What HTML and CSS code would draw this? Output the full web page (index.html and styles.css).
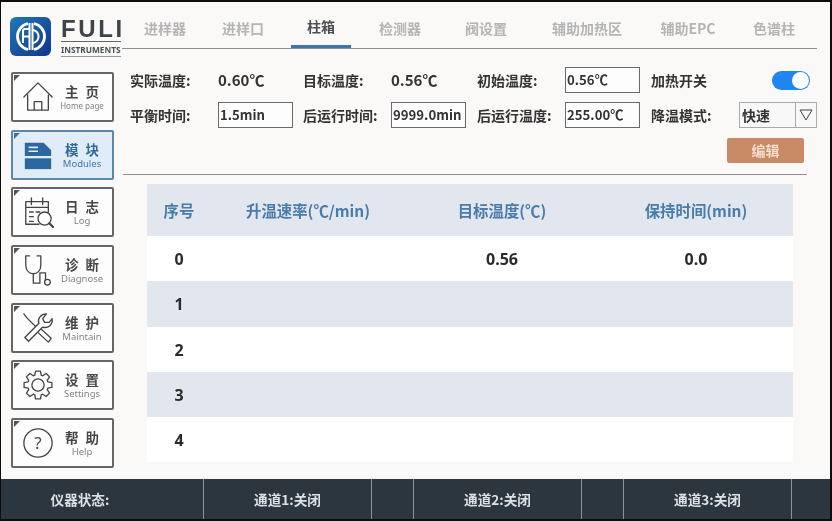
FILE: index.html
```html
<!DOCTYPE html>
<html lang="zh">
<head>
<meta charset="utf-8">
<title>FULI Instruments</title>
<link rel="stylesheet" href="styles.css">
</head>
<body>
<div class="frame">
  <header class="header">
    <div class="brand">
      <svg class="logo" viewBox="0 0 41 39">
        <defs><linearGradient id="lg" x1="0" y1="0" x2="1" y2="1"><stop offset="0" stop-color="#1f78b8"/><stop offset="1" stop-color="#12348a"/></linearGradient></defs>
        <rect width="41" height="39" rx="6" fill="url(#lg)"/>
        <path d="M18 6.500A13.300 13.300 0 0 0 18 32.500M24 6.500A13.300 13.300 0 0 1 24 32.500" fill="none" stroke="#fff" stroke-width="2.800"/>
        <path d="M19.500 12h-4.500a2 2 0 0 0-2 2v12M13 19.500h6M19.500 6v27M22.500 6v27" fill="none" stroke="#fff" stroke-width="2"/>
        <path d="M23 13c4 1 5.500 3.500 5.500 6.500S27 25 23 26" fill="none" stroke="#fff" stroke-width="2"/>
      </svg>
      <div class="wordmark">
        <span class="fuli">FULI</span>
        <span class="instruments">INSTRUMENTS</span>
      </div>
    </div>
    <nav class="tabs">
      <a class="tab">进样器</a>
      <a class="tab">进样口</a>
      <a class="tab active">柱箱</a>
      <a class="tab">检测器</a>
      <a class="tab">阀设置</a>
      <a class="tab">辅助加热区</a>
      <a class="tab">辅助EPC</a>
      <a class="tab">色谱柱</a>
    </nav>
  </header>

  <div class="main">
    <aside class="sidebar">
      <button class="nav-btn">
        <span class="nav-icon"><svg viewBox="0 0 34 34"><path d="M2 17 17 2l15 15M6 15v16h22V15M13 31v-9h8v9" class="ln"/></svg></span>
        <span class="nav-text"><b>主页</b><small class="tight">Home page</small></span>
      </button>
      <button class="nav-btn current">
        <span class="nav-icon"><svg viewBox="0 0 34 34"><path d="M3 4h20l8 8v6H3z" fill="#2e66a0"/><path d="M3 20.500h28V32H3z" fill="#2e66a0"/><path d="M7 9h10M7 13h10" stroke="#e0edf8" stroke-width="1.800"/></svg></span>
        <span class="nav-text"><b>模块</b><small>Modules</small></span>
      </button>
      <button class="nav-btn">
        <span class="nav-icon"><svg viewBox="0 0 34 34"><path d="M18 30H4V6h24v11M4 12h24M10 2v7M22 2v7M8 17h4M15 17h4M8 22h4M8 27h4" class="ln"/><circle cx="24" cy="24" r="7" class="ln"/><path d="m29 29 4 4" class="ln thick"/></svg></span>
        <span class="nav-text"><b>日志</b><small>Log</small></span>
      </button>
      <button class="nav-btn">
        <span class="nav-icon"><svg viewBox="0 0 34 34"><path d="M8 2H4v10c0 6 4 9 8 9s8-3 8-9V2h-4M12 21v10h7V20h6v8" class="ln"/><circle cx="27" cy="30" r="3" class="ln"/></svg></span>
        <span class="nav-text"><b>诊断</b><small>Diagnose</small></span>
      </button>
      <button class="nav-btn">
        <span class="nav-icon"><svg viewBox="0 0 34 34"><path d="M2 2l3 4 11 11" class="ln"/><path d="M17 15 31 28l-3 4-14-13z" class="ln white"/><path d="M3 27 18 12C16 7 20 2 26 2l-4 5 2 4h5l3-4c1 6-4 11-10 9L7 31z" class="ln white"/></svg></span>
        <span class="nav-text"><b>维护</b><small>Maintain</small></span>
      </button>
      <button class="nav-btn">
        <span class="nav-icon"><svg viewBox="0 0 34 34"><path d="M27.460 13.600 31.770 14.400V19.600L27.460 20.400 26.800 22 29.290 25.600 25.600 29.290 22 26.800 20.400 27.460 19.600 31.770H14.400L13.600 27.460 12 26.800 8.400 29.290 4.710 25.600 7.200 22 6.540 20.400 2.230 19.600V14.400L6.540 13.600 7.200 12 4.710 8.400 8.400 4.710 12 7.200 13.600 6.540 14.400 2.230H19.600L20.400 6.540 22 7.200 25.600 4.710 29.290 8.400 26.800 12z" class="ln"/><circle cx="17" cy="17" r="6.500" class="ln"/></svg></span>
        <span class="nav-text"><b>设置</b><small>Settings</small></span>
      </button>
      <button class="nav-btn">
        <span class="nav-icon"><svg viewBox="0 0 34 34"><circle cx="17" cy="17" r="15" class="ln"/><text x="17" y="23" class="help-mark">?</text></svg></span>
        <span class="nav-text"><b>帮助</b><small>Help</small></span>
      </button>
    </aside>

    <section class="content">
      <div class="params">
        <span class="lbl">实际温度:</span><span class="val">0.60℃</span>
        <span class="lbl">目标温度:</span><span class="val">0.56℃</span>
        <span class="lbl">初始温度:</span><span class="input">0.56℃</span>
        <span class="lbl">加热开关</span><span class="switch"><i></i></span>
        <span class="lbl">平衡时间:</span><span class="input">1.5min</span>
        <span class="lbl">后运行时间:</span><span class="input">9999.0min</span>
        <span class="lbl">后运行温度:</span><span class="input">255.00℃</span>
        <span class="lbl">降温模式:</span>
        <span class="select"><span>快速</span><span class="caret"><svg viewBox="0 0 14 12" width="14" height="12"><path d="M1 1h12L7 11z" fill="none" stroke="#444" stroke-width="1"/></svg></span></span>
      </div>
      <div class="actions"><button class="edit">编辑</button></div>
      <table class="grid">
        <thead><tr><th>序号</th><th>升温速率(℃/min)</th><th>目标温度(℃)</th><th>保持时间(min)</th></tr></thead>
        <tbody>
          <tr><td>0</td><td></td><td>0.56</td><td>0.0</td></tr>
          <tr><td>1</td><td></td><td></td><td></td></tr>
          <tr><td>2</td><td></td><td></td><td></td></tr>
          <tr><td>3</td><td></td><td></td><td></td></tr>
          <tr><td>4</td><td></td><td></td><td></td></tr>
        </tbody>
      </table>
    </section>
  </div>

  <footer class="status">
    <span class="cell first">仪器状态:</span>
    <span class="cell">通道1:关闭</span>
    <span class="cell"></span>
    <span class="cell">通道2:关闭</span>
    <span class="cell"></span>
    <span class="cell">通道3:关闭</span>
    <span class="cell"></span>
  </footer>
</div>
</body>
</html>
```
FILE: styles.css
```css
* { box-sizing: border-box; }
html, body { margin: 0; padding: 0; background: #fff; }
body { font-family: "Noto Sans CJK SC", "Noto Sans", sans-serif; }

.frame {
  width: 832px;
  height: 521px;
  border: solid #0d0d0d;
  border-width: 2px 2px 2px 1px;
  background: #fbf9f7;
  display: flex;
  flex-direction: column;
  overflow: hidden;
  filter: blur(0.4px);
}

/* header */
.header { display: flex; height: 47px; flex: none; overflow: visible; }
.brand { width: 121px; height: 54px; display: flex; padding: 15px 0 0 9px; flex: none; }
.logo { width: 41px; height: 39px; flex: none; }
.wordmark { margin-left: 10px; display: flex; flex-direction: column; width: 60px; flex: none; }
.fuli {
  font: 700 24px/24px "Liberation Sans", sans-serif;
  letter-spacing: 2.600px;
  color: #3f444a;
  height: 25px;
  border-bottom: 1px solid #666;
  white-space: nowrap;
}
.instruments {
  font: 700 8.300px/12px "Noto Sans", sans-serif;
  color: #4a4f55;
  white-space: nowrap;
  padding-top: 2px;
  height: 15px;
  border-bottom: 1px solid #999;
}
.tabs {
  width: 695px;
  height: 47px;
  padding-left: 4px;
  border-bottom: 1px solid #8f8f8f;
  display: grid;
  grid-template-columns: 78px 78px 78px 80px 92px 110px 92px 80px;
}
.tab {
  justify-self: center;
  height: 46px;
  padding: 16px 0 0;
  font-size: 14px;
  line-height: 20px;
  font-weight: 700;
  color: #b4b4b4;
  white-space: nowrap;
}
.tab.active {
  color: #4a4f55;
  padding: 14px 16px 0;
  border-bottom: 3px solid #3f74a8;
}

/* main */
.main { flex: 1; display: flex; min-height: 0; }
.sidebar {
  width: 122px;
  flex: none;
  padding: 23px 0 0 10px;
  display: flex;
  flex-direction: column;
  gap: 7.700px;
}
.nav-btn {
  position: relative;
  width: 103px;
  height: 50px;
  padding: 0;
  border: 2px solid #666;
  border-radius: 2px;
  background: #fdfdfd;
  display: flex;
  align-items: center;
  font-family: inherit;
}
.nav-btn::before {
  content: "";
  position: absolute;
  left: 1px;
  top: 1px;
  border-style: solid;
  border-width: 6px 6px 0 0;
  border-color: #555 transparent transparent transparent;
}
.nav-icon { width: 50px; display: flex; justify-content: center; flex: none; }
.nav-icon svg { width: 32px; height: 32px; display: block; }
.nav-text { width: 38px; display: flex; flex-direction: column; align-items: center; flex: none; }
.nav-text b {
  font-size: 13.500px;
  line-height: 18px;
  font-weight: 700;
  letter-spacing: 7px;
  margin-right: -7px;
  color: #474747;
  white-space: nowrap;
}
.nav-text small {
  font: 400 9.500px/12px "Noto Sans", sans-serif;
  color: #7f8488;
  white-space: nowrap;
}
.nav-text small.tight { font-size: 8px; }
.nav-btn.current { background: #e0edf8; border-color: #5f86a5; }
.nav-btn.current::before { border-top-color: #3f6f9e; }
.nav-btn.current b { color: #2f6a9c; }
.nav-btn.current small { color: #3f76a6; }

.ln { fill: none; stroke: #444; stroke-width: 1.400; stroke-linejoin: round; stroke-linecap: round; }
.ln.thick { stroke-width: 2.400; }
.ln.white { fill: #fdfdfd; }
.help-mark { font: 400 18px "Noto Sans", sans-serif; fill: #444; text-anchor: middle; }

/* content */
.content { flex: 1; min-width: 0; }
.params {
  margin-left: 7px;
  padding-top: 18px;
  display: grid;
  grid-template-columns: 88px 85px 88px 86px 88px 86px 88px 78px;
  grid-auto-rows: 26px;
  row-gap: 9px;
  align-items: center;
}
.lbl, .val, .input, .select {
  font-size: 14px;
  line-height: 18px;
  font-weight: 700;
  color: #333;
  white-space: nowrap;
}
.val { font-size: 15px; }
.input {
  width: 75px;
  height: 26px;
  font-size: 13.200px;
  border: 1.500px solid #6a6a6a;
  background: #fdfdfd;
  padding: 3px 0 0 1px;
}
.switch {
  width: 38px;
  height: 19px;
  margin-left: 33px;
  border-radius: 10px;
  background: #1e86ee;
  position: relative;
}
.switch i {
  position: absolute;
  right: 1px;
  top: 1px;
  width: 17px;
  height: 17px;
  border-radius: 50%;
  background: #fff;
}
.select {
  width: 78px;
  height: 26px;
  border: 1px solid #aaa;
  background: #f8f8f8;
  display: flex;
  align-items: center;
  padding-left: 2px;
}
.select span:first-child { flex: 1; }
.caret {
  width: 21px;
  height: 24px;
  border-left: 1px solid #aaa;
  display: flex;
  align-items: center;
  justify-content: center;
}
.actions {
  margin-top: 10px;
  height: 37px;
  padding-left: 604px;
  border-bottom: 1px solid #8f8f8f;
  width: 684px;
}
.edit {
  width: 77px;
  height: 25px;
  display: block;
  border: 0;
  border-radius: 2px;
  background: #c98a66;
  color: #f3ddcf;
  font: 700 14px/25px "Noto Sans CJK SC", sans-serif;
  padding: 0;
}
.grid {
  margin: 9px 0 0 24px;
  width: 646px;
  table-layout: fixed;
  border-collapse: collapse;
}
.grid th:first-child, .grid td:first-child { width: 64px; }
.grid th {
  height: 52px;
  background: #e2e6ef;
  color: #4a7cab;
  font-size: 15.400px;
  font-weight: 700;
  padding: 0;
}
.grid td {
  height: 45.300px;
  padding: 1px 0 0;
  text-align: center;
  background: #fff;
  color: #2b2b2b;
  font: 700 16px "Noto Sans", sans-serif;
}
.grid tbody tr:nth-child(even) td { background: #e2e6ef; }

/* status bar */
.status {
  flex: none;
  height: 40px;
  background: #2b363e;
  display: grid;
  grid-template-columns: 203px 168px 42px 168px 42px 168px 1fr;
}
.cell {
  color: #dde1e3;
  font-size: 13.600px;
  font-weight: 700;
  line-height: 40px;
  text-align: center;
  border-right: 1px solid #8c9499;
  white-space: nowrap;
}
.cell.first { padding-right: 44px; }
.cell:last-child { border-right: 0; }
```
